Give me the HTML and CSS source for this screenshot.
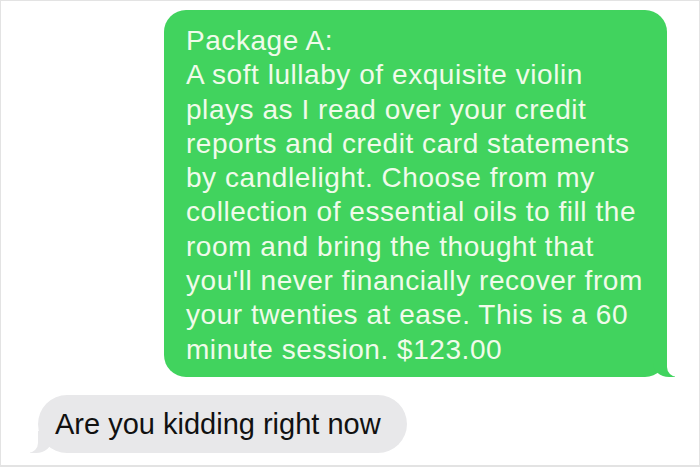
FILE: index.html
```html
<!DOCTYPE html>
<html lang="en">
<head>
    <meta charset="UTF-8">
    <title>Messages</title>
    <link rel="stylesheet" href="styles.css">
</head>
<body>
    <div class="screen">
        <div class="bubble sent">
            Package A:<br>
            A soft lullaby of exquisite violin<br>
            plays as I read over your credit<br>
            reports and credit card statements<br>
            by candlelight. Choose from my<br>
            collection of essential oils to fill the<br>
            room and bring the thought that<br>
            you'll never financially recover from<br>
            your twenties at ease. This is a 60<br>
            minute session. $123.00
        </div>
        <div class="bubble received">Are you kidding right now</div>
    </div>
</body>
</html>
```

FILE: styles.css
```css
body {
    margin: 0;
    background: #fff;
    font-family: 'Liberation Sans', Arial, sans-serif;
}
.screen {
    box-sizing: border-box;
    width: 700px;
    height: 467px;
    border: 1px solid #e3e3e3;
    border-bottom-width: 2px;
    display: flex;
    flex-direction: column;
    padding: 9px 32px 0 37px;
}
.bubble {
    position: relative;
    white-space: nowrap;
}
.sent {
    align-self: flex-end;
    width: 503px;
    box-sizing: border-box;
    padding: 14px 10px 10px 22px;
    background: #41d35e;
    color: #f0fbea;
    font-size: 28px;
    line-height: 34.3px;
    letter-spacing: 0.55px;
    border-radius: 22px;
}
.sent::before {
    content: "";
    position: absolute;
    bottom: 0;
    right: -8px;
    width: 22px;
    height: 22px;
    background: #41d35e;
    border-bottom-left-radius: 16px 14px;
}
.sent::after {
    content: "";
    position: absolute;
    bottom: 0;
    right: -12px;
    width: 12px;
    height: 24px;
    background: #fff;
    border-bottom-left-radius: 10px;
}
.received {
    align-self: flex-start;
    margin-top: 18px;
    padding: 12px 26px 12px 17px;
    background: #e8e8ea;
    color: #111;
    font-size: 29px;
    line-height: 34px;
    border-radius: 29px;
}
.received::before {
    content: "";
    position: absolute;
    bottom: 0;
    left: -8px;
    width: 22px;
    height: 22px;
    background: #e8e8ea;
    border-bottom-right-radius: 16px 14px;
}
.received::after {
    content: "";
    position: absolute;
    bottom: 0;
    left: -12px;
    width: 12px;
    height: 24px;
    background: #fff;
    border-bottom-right-radius: 10px;
}
```
